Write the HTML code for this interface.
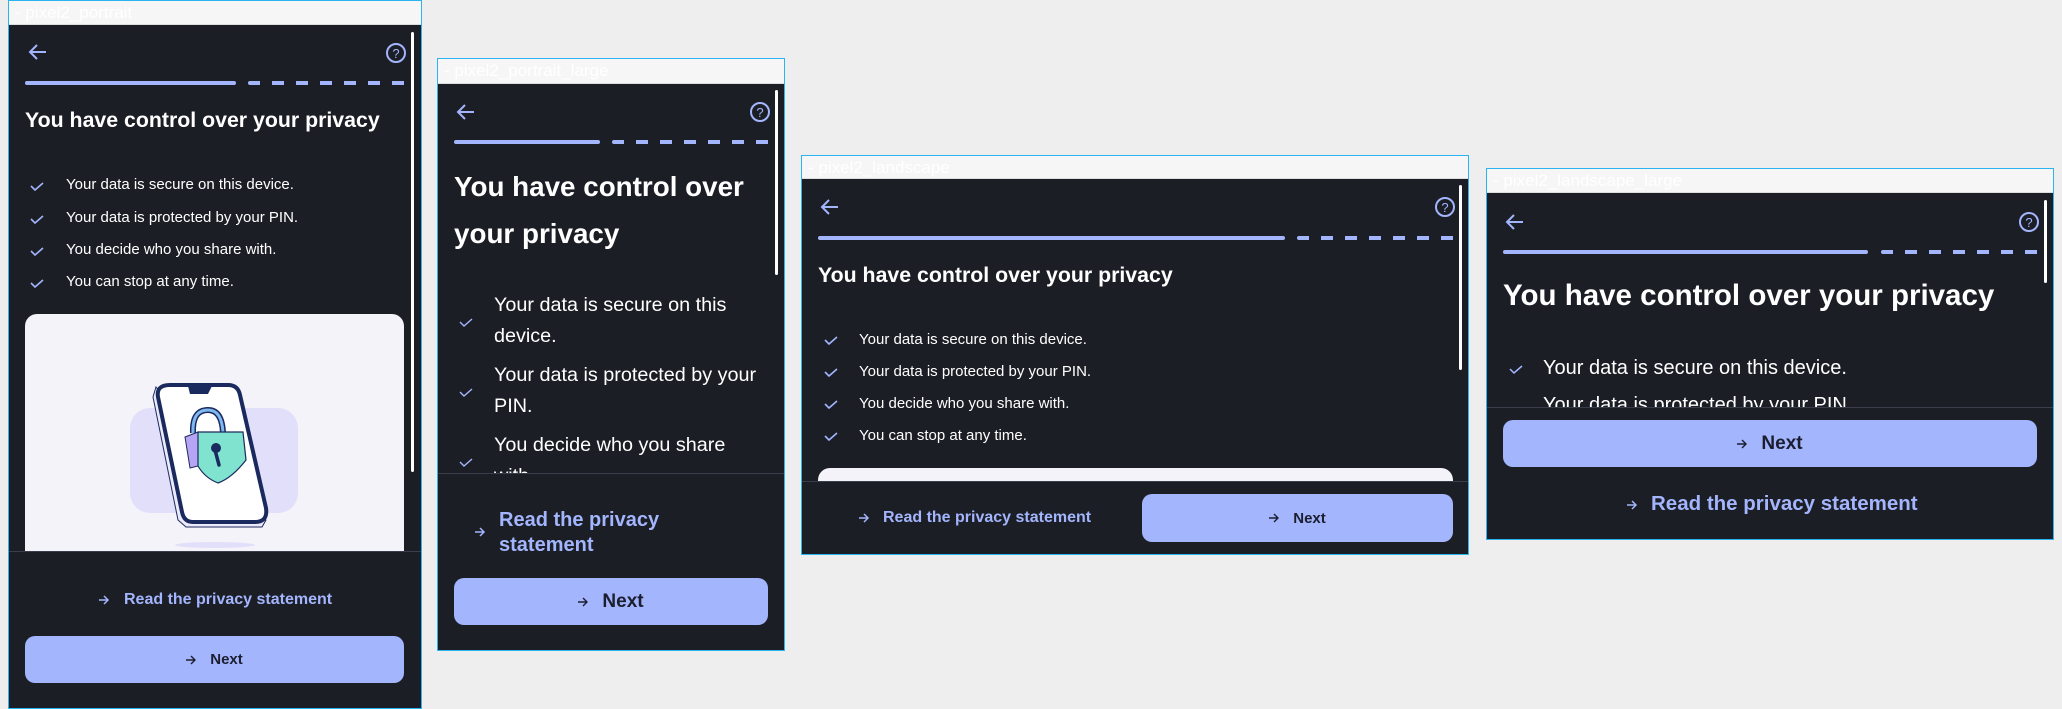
<!DOCTYPE html>
<html><head><meta charset="utf-8"><style>
*{margin:0;padding:0;box-sizing:border-box}
body{width:2062px;height:709px;background:#eeeeee;position:relative;overflow:hidden;font-family:"Liberation Sans",sans-serif}
.a{position:absolute}
.frame{position:absolute;border:1px solid #2ab4f2;background:#1c1e26;overflow:hidden}
.lab{position:absolute;left:0;right:0;top:0;background:#f6f6f6;color:#fff;font-size:17px;line-height:24px;padding-left:6px;white-space:nowrap;border-bottom:1px solid #ddd}
.sb{position:absolute;width:3px;background:#fff;border-radius:2px}
.bar{position:absolute;height:4px;border-radius:2px;background:#a3b5fd}
.dash{position:absolute;height:4px;background:repeating-linear-gradient(90deg,#a3b5fd 0 12px,transparent 12px 24px);border-radius:2px}
.t{position:absolute;color:#fff;font-weight:bold;white-space:nowrap}
.li{position:absolute;color:#fff;white-space:nowrap}
.div{position:absolute;height:1px;background:#3a3d4a}
.btn{position:absolute;background:#a3b5fd;border-radius:10px;color:#1c1e30;font-weight:bold;display:flex;align-items:center;justify-content:center}
.btn svg{position:static;margin-right:14px}
.link{position:absolute;color:#a3b5fd;font-weight:bold;white-space:nowrap}
svg{position:absolute;overflow:visible}
</style></head><body>

<!-- Frame 1 -->
<div class="frame" style="left:8px;top:0;width:414px;height:709px"></div>
<div class="lab a" style="left:9px;top:1px;width:412px;height:24px">- pixel2_portrait</div>
<div class="sb" style="left:411px;top:32px;height:440px"></div>
<svg style="left:0;top:0" width="1" height="1"><path d="M46 52H30M37 45l-7 7 7 7" stroke="#a3b5fd" stroke-width="2" fill="none"/><circle cx="396" cy="53" r="9" stroke="#a3b5fd" stroke-width="2" fill="none"/><text x="396" y="58" text-anchor="middle" font-size="13" fill="#a3b5fd" font-family="Liberation Sans">?</text></svg>
<div class="bar" style="left:25px;top:81px;width:211px"></div>
<div class="dash" style="left:248px;top:81px;width:160px"></div>
<div class="t" style="left:25px;top:108px;font-size:21.3px">You have control over your privacy</div>
<div class="li" style="left:66px;top:176px;font-size:15px">Your data is secure on this device.</div>
<div class="li" style="left:66px;top:209px;font-size:15px">Your data is protected by your PIN.</div>
<div class="li" style="left:66px;top:241px;font-size:15px">You decide who you share with.</div>
<div class="li" style="left:66px;top:273px;font-size:15px">You can stop at any time.</div>
<svg style="left:0;top:0" width="1" height="1"><g stroke="#a3b5fd" stroke-width="1.6" fill="none"><path d="M31 186l4 4 8-7"/><path d="M31 219l4 4 8-7"/><path d="M31 251l4 4 8-7"/><path d="M31 283l4 4 8-7"/></g></svg>
<div class="a" style="left:25px;top:314px;width:379px;height:260px;background:#f4f3f9;border-radius:12px;overflow:hidden"></div>
<svg style="left:0;top:0" width="1" height="1">
<rect x="130" y="408" width="168" height="105" rx="20" fill="#e2dffb"/>
<ellipse cx="215" cy="545" rx="40" ry="3" fill="#e2dffb"/>
<path d="M156 387 L153 397 L178 520 L186 527 L262 527 L266 520 Z" fill="#eceafb" stroke="#1b2a5e" stroke-width="1"/>
<path d="M170 385 H228 Q238 385 240 395 L266 508 Q268 522 255 522 H193 Q184 522 182 512 L158 397 Q156 385 170 385 Z" fill="#fff" stroke="#1b2a5e" stroke-width="4"/>
<path d="M188 386 L190 394 H208 L212 386 Z" fill="#1b2a5e"/>
<path d="M193 433 Q192 410 208 410 Q222 410 223 433" fill="none" stroke="#1b2a5e" stroke-width="6"/>
<path d="M193 433 Q192 410 208 410 Q222 410 223 433" fill="none" stroke="#7fb8f0" stroke-width="3"/>
<path d="M185 437 L198 432 L198 466 L190 468 Z" fill="#b8a4f4" stroke="#1b2a5e" stroke-width="1"/>
<path d="M198 432 L243 432 L246 460 Q232 478 218 483 Q205 478 198 466 Z" fill="#7fe3d0" stroke="#1b2a5e" stroke-width="1.2"/>
<circle cx="216" cy="448" r="5" fill="#1b2a5e"/><path d="M215 450 L219 465" stroke="#1b2a5e" stroke-width="3.5" stroke-linecap="round"/>
</svg>
<div class="a" style="left:9px;top:551px;width:412px;height:157px;background:#1c1e26"></div>
<div class="div" style="left:9px;top:551px;width:412px"></div>
<svg style="left:0;top:0" width="1" height="1"><path d="M99 600h9M104 596l4 4-4 4" stroke="#a3b5fd" stroke-width="1.5" fill="none"/></svg>
<div class="link" style="left:124px;top:591px;font-size:16px">Read the privacy statement</div>
<div class="btn" style="left:25px;top:636px;width:379px;height:47px;font-size:15px"><svg width="10" height="8"><path d="M0 4h9M5 0l4 4-4 4" stroke="#1c1e30" stroke-width="1.4" fill="none"/></svg>Next</div>

<!-- Frame 2 -->
<div class="frame" style="left:437px;top:58px;width:348px;height:593px"></div>
<div class="lab a" style="left:438px;top:59px;width:346px;height:25px">- pixel2_portrait_large</div>
<div class="sb" style="left:775px;top:90px;height:185px"></div>
<svg style="left:0;top:0" width="1" height="1"><path d="M474 112H458M465 105l-7 7 7 7" stroke="#a3b5fd" stroke-width="2" fill="none"/><circle cx="760" cy="112" r="9" stroke="#a3b5fd" stroke-width="2" fill="none"/><text x="760" y="117" text-anchor="middle" font-size="13" fill="#a3b5fd" font-family="Liberation Sans">?</text></svg>
<div class="bar" style="left:454px;top:140px;width:146px"></div>
<div class="dash" style="left:612px;top:140px;width:160px"></div>
<div class="t" style="left:454px;top:163px;font-size:27.8px;line-height:47px">You have control over<br>your privacy</div>
<div class="li" style="left:494px;top:290px;font-size:19.8px;line-height:31px">Your data is secure on this<br>device.</div>
<div class="li" style="left:494px;top:360px;font-size:19.8px;line-height:31px">Your data is protected by your<br>PIN.</div>
<div class="li" style="left:494px;top:430px;font-size:19.8px;line-height:31px">You decide who you share<br>with.</div>
<svg style="left:0;top:0" width="1" height="1"><g stroke="#a3b5fd" stroke-width="1.4" fill="none"><path d="M460 322l4 4 8-7"/><path d="M460 392l4 4 8-7"/><path d="M460 462l4 4 8-7"/></g></svg>
<div class="a" style="left:438px;top:473px;width:346px;height:177px;background:#1c1e26"></div>
<div class="div" style="left:438px;top:473px;width:346px"></div>
<svg style="left:0;top:0" width="1" height="1"><path d="M475 532h9M480 528l4 4-4 4" stroke="#a3b5fd" stroke-width="1.5" fill="none"/></svg>
<div class="link" style="left:499px;top:508px;font-size:20px;line-height:25px">Read the privacy<br>statement</div>
<div class="btn" style="left:454px;top:578px;width:314px;height:47px;font-size:19px"><svg width="10" height="8"><path d="M0 4h9M5 0l4 4-4 4" stroke="#1c1e30" stroke-width="1.4" fill="none"/></svg>Next</div>

<!-- Frame 3 -->
<div class="frame" style="left:801px;top:155px;width:668px;height:400px"></div>
<div class="lab a" style="left:802px;top:156px;width:666px;height:23px">- pixel2_landscape</div>
<div class="sb" style="left:1459px;top:185px;height:185px"></div>
<svg style="left:0;top:0" width="1" height="1"><path d="M838 207H822M829 200l-7 7 7 7" stroke="#a3b5fd" stroke-width="2" fill="none"/><circle cx="1445" cy="207" r="9" stroke="#a3b5fd" stroke-width="2" fill="none"/><text x="1445" y="212" text-anchor="middle" font-size="13" fill="#a3b5fd" font-family="Liberation Sans">?</text></svg>
<div class="bar" style="left:818px;top:236px;width:467px"></div>
<div class="dash" style="left:1297px;top:236px;width:160px"></div>
<div class="t" style="left:818px;top:263px;font-size:21.3px">You have control over your privacy</div>
<div class="li" style="left:859px;top:331px;font-size:15px">Your data is secure on this device.</div>
<div class="li" style="left:859px;top:363px;font-size:15px">Your data is protected by your PIN.</div>
<div class="li" style="left:859px;top:395px;font-size:15px">You decide who you share with.</div>
<div class="li" style="left:859px;top:427px;font-size:15px">You can stop at any time.</div>
<svg style="left:0;top:0" width="1" height="1"><g stroke="#a3b5fd" stroke-width="1.6" fill="none"><path d="M825 340l4 4 8-7"/><path d="M825 372l4 4 8-7"/><path d="M825 404l4 4 8-7"/><path d="M825 436l4 4 8-7"/></g></svg>
<div class="a" style="left:818px;top:468px;width:635px;height:40px;background:#f4f3f9;border-radius:12px"></div>
<div class="a" style="left:802px;top:481px;width:666px;height:73px;background:#1c1e26"></div>
<div class="div" style="left:802px;top:481px;width:666px"></div>
<svg style="left:0;top:0" width="1" height="1"><path d="M859 518h9M864 514l4 4-4 4" stroke="#a3b5fd" stroke-width="1.5" fill="none"/></svg>
<div class="link" style="left:883px;top:509px;font-size:16px">Read the privacy statement</div>
<div class="btn" style="left:1142px;top:494px;width:311px;height:48px;font-size:15px"><svg width="10" height="8"><path d="M0 4h9M5 0l4 4-4 4" stroke="#1c1e30" stroke-width="1.4" fill="none"/></svg>Next</div>

<!-- Frame 4 -->
<div class="frame" style="left:1486px;top:168px;width:568px;height:372px"></div>
<div class="lab a" style="left:1487px;top:169px;width:566px;height:24px">- pixel2_landscape_large</div>
<div class="sb" style="left:2044px;top:200px;height:83px"></div>
<svg style="left:0;top:0" width="1" height="1"><path d="M1523 222H1507M1514 215l-7 7 7 7" stroke="#a3b5fd" stroke-width="2" fill="none"/><circle cx="2029" cy="222" r="9" stroke="#a3b5fd" stroke-width="2" fill="none"/><text x="2029" y="227" text-anchor="middle" font-size="13" fill="#a3b5fd" font-family="Liberation Sans">?</text></svg>
<div class="bar" style="left:1503px;top:250px;width:365px"></div>
<div class="dash" style="left:1881px;top:250px;width:160px"></div>
<div class="t" style="left:1503px;top:279px;font-size:29.5px">You have control over your privacy</div>
<div class="li" style="left:1543px;top:357px;font-size:20px">Your data is secure on this device.</div>
<div class="li" style="left:1543px;top:394px;font-size:20px">Your data is protected by your PIN.</div>
<svg style="left:0;top:0" width="1" height="1"><g stroke="#a3b5fd" stroke-width="1.5" fill="none"><path d="M1510 369l4 4 8-7"/></g></svg>
<div class="a" style="left:1487px;top:407px;width:566px;height:132px;background:#1c1e26"></div>
<div class="div" style="left:1487px;top:407px;width:566px"></div>
<div class="btn" style="left:1503px;top:420px;width:534px;height:47px;font-size:19px"><svg width="10" height="8"><path d="M0 4h9M5 0l4 4-4 4" stroke="#1c1e30" stroke-width="1.4" fill="none"/></svg>Next</div>
<svg style="left:0;top:0" width="1" height="1"><path d="M1627 505h9M1632 501l4 4-4 4" stroke="#a3b5fd" stroke-width="1.5" fill="none"/></svg>
<div class="link" style="left:1651px;top:492px;font-size:20.5px">Read the privacy statement</div>

</body></html>
